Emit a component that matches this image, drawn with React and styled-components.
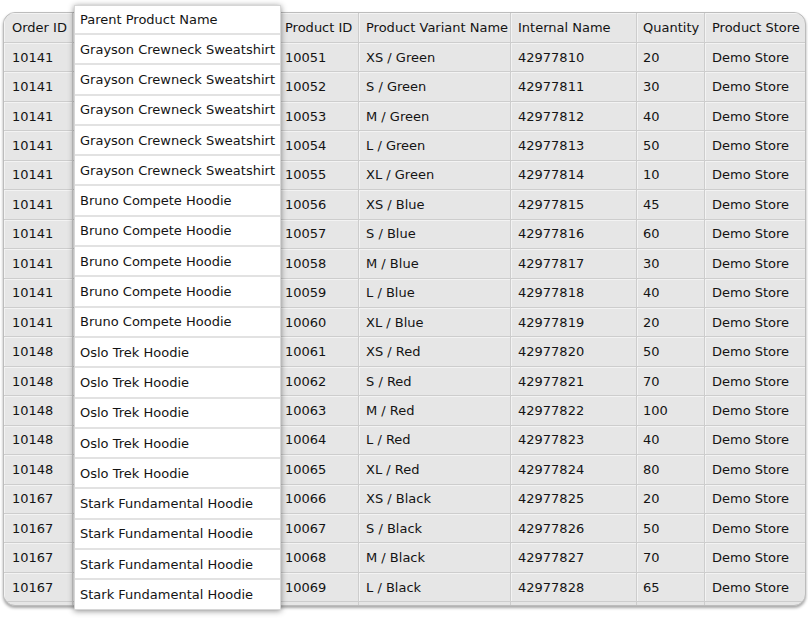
import React from "react";
import styled, { createGlobalStyle } from "styled-components";

const Global = createGlobalStyle`
  html, body { margin: 0; padding: 0; background: #ffffff; }
  body { font-family: "DejaVu Sans", Verdana, sans-serif; font-size: 13px; color: #141414; }
`;

const COLS = "69px 205px 81px 152px 126px 68px 1fr";

const Page = styled.div`
  position: relative;
  width: 808px;
  height: 621px;
  padding: 12px 2px 0 3px;
  box-sizing: border-box;
`;

const Table = styled.div`
  width: 803px;
  background: #e6e6e6;
  border: 1px solid #bcbcbc;
  border-radius: 12px;
  box-shadow: 0 2px 3px rgba(0, 0, 0, 0.35);
  box-sizing: border-box;
  overflow: hidden;
  padding-bottom: 3px;
`;

const Row = styled.div`
  display: grid;
  grid-template-columns: ${COLS};
  height: ${(p) => (p.$header ? "30px" : "29.45px")};
`;

const Cell = styled.div`
  display: flex;
  align-items: center;
  padding-left: ${(p) => p.$pad || 8}px;
  border-right: 1px solid #cdcdcd;
  border-bottom: 1px solid #cdcdcd;
  box-shadow: inset 1px 1px 0 #f3f3f3;
  white-space: nowrap;
  overflow: hidden;
  &:last-child { border-right: none; }
`;

const Tail = styled.div`
  display: grid;
  grid-template-columns: ${COLS};
  height: 3px;
  margin-bottom: -3px;
`;

const TailCell = styled.div`
  border-right: 1px solid #cdcdcd;
  &:last-child { border-right: none; }
`;

const Lifted = styled.div`
  position: absolute;
  left: 74px;
  top: 5px;
  width: 207px;
  background: #ffffff;
  border: 1px solid #d6d6d6;
  box-sizing: border-box;
  box-shadow: 0 1px 6px rgba(0, 0, 0, 0.45);
  display: flex;
  flex-direction: column;
`;

const LiftedCell = styled.div`
  height: ${(p) => (p.$header ? "27px" : "28.3px")};
  display: flex;
  align-items: center;
  padding-left: 5px;
  white-space: nowrap;
  border-bottom: 2px solid #e2e2e2;
  &:last-child { border-bottom: none; }
`;

const rows = [
  ["10141", "Grayson Crewneck Sweatshirt", "10051", "XS / Green", "42977810", "20"],
  ["10141", "Grayson Crewneck Sweatshirt", "10052", "S / Green", "42977811", "30"],
  ["10141", "Grayson Crewneck Sweatshirt", "10053", "M / Green", "42977812", "40"],
  ["10141", "Grayson Crewneck Sweatshirt", "10054", "L / Green", "42977813", "50"],
  ["10141", "Grayson Crewneck Sweatshirt", "10055", "XL / Green", "42977814", "10"],
  ["10141", "Bruno Compete Hoodie", "10056", "XS / Blue", "42977815", "45"],
  ["10141", "Bruno Compete Hoodie", "10057", "S / Blue", "42977816", "60"],
  ["10141", "Bruno Compete Hoodie", "10058", "M / Blue", "42977817", "30"],
  ["10141", "Bruno Compete Hoodie", "10059", "L / Blue", "42977818", "40"],
  ["10141", "Bruno Compete Hoodie", "10060", "XL / Blue", "42977819", "20"],
  ["10148", "Oslo Trek Hoodie", "10061", "XS / Red", "42977820", "50"],
  ["10148", "Oslo Trek Hoodie", "10062", "S / Red", "42977821", "70"],
  ["10148", "Oslo Trek Hoodie", "10063", "M / Red", "42977822", "100"],
  ["10148", "Oslo Trek Hoodie", "10064", "L / Red", "42977823", "40"],
  ["10148", "Oslo Trek Hoodie", "10065", "XL / Red", "42977824", "80"],
  ["10167", "Stark Fundamental Hoodie", "10066", "XS / Black", "42977825", "20"],
  ["10167", "Stark Fundamental Hoodie", "10067", "S / Black", "42977826", "50"],
  ["10167", "Stark Fundamental Hoodie", "10068", "M / Black", "42977827", "70"],
  ["10167", "Stark Fundamental Hoodie", "10069", "L / Black", "42977828", "65"],
];

const headers = ["Order ID", "Parent Product Name", "Product ID", "Product Variant Name", "Internal Name", "Quantity", "Product Store"];
const pads = [8, 8, 7, 7, 7, 6, 7];

// The dragged column (index 1) leaves an empty slot in the table beneath the lifted copy.
const slot = (v, i) => (i === 1 ? "" : v);

export default function App() {
  return (
    <>
      <Global />
      <Page>
        <Table>
          <Row $header>
            {headers.map((h, i) => (
              <Cell key={h} $pad={pads[i]}>{slot(h, i)}</Cell>
            ))}
          </Row>
          {rows.map((r, idx) => (
            <Row key={idx}>
              {[...r, "Demo Store"].map((v, i) => (
                <Cell key={i} $pad={pads[i]}>{slot(v, i)}</Cell>
              ))}
            </Row>
          ))}
          <Tail>
            {headers.map((h) => (
              <TailCell key={h} />
            ))}
          </Tail>
        </Table>
        <Lifted>
          <LiftedCell $header>Parent Product Name</LiftedCell>
          {rows.map((r, idx) => (
            <LiftedCell key={idx}>{r[1]}</LiftedCell>
          ))}
        </Lifted>
      </Page>
    </>
  );
}
